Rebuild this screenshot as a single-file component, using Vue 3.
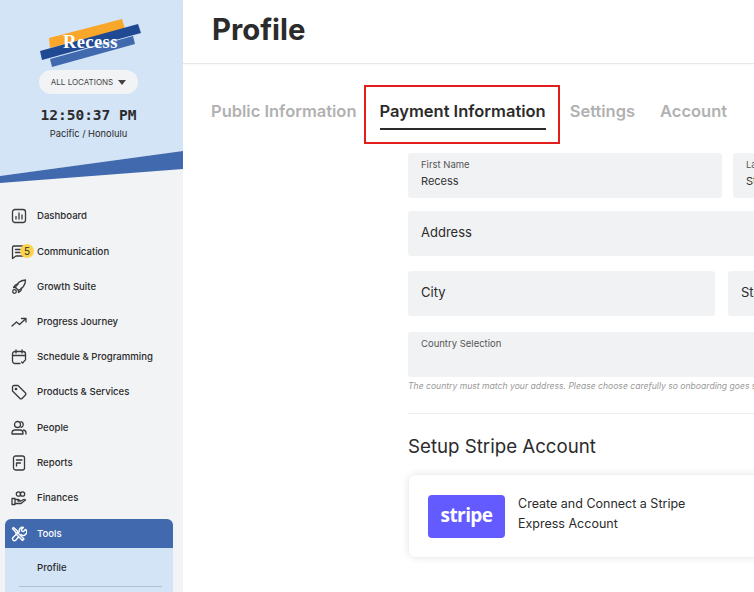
<script setup>
const items = [
  { label: 'Dashboard', icon: 'dash' },
  { label: 'Communication', icon: 'chat', badge: 5 },
  { label: 'Growth Suite', icon: 'rocket' },
  { label: 'Progress Journey', icon: 'trend' },
  { label: 'Schedule & Programming', icon: 'cal' },
  { label: 'Products & Services', icon: 'tag' },
  { label: 'People', icon: 'people' },
  { label: 'Reports', icon: 'report' },
  { label: 'Finances', icon: 'fin' },
]
const tabs = ['Public Information', 'Payment Information', 'Settings', 'Account']
</script>

<template>
  <div class="app">
    <aside class="side">
      <div class="brand">
        <div class="logo">
          <svg width="102" height="50" viewBox="0 0 102 50">
            <polygon points="9,20 82,1 85,11 10,30" fill="#f9a72b" />
            <polygon points="10,41 93,18 95,26 12,49" fill="#4069ae" />
            <polygon points="0,33 98,6 101,15 2,42" fill="#1f4a93" />
          </svg>
          <span class="logo-text">Recess</span>
        </div>
        <div class="loc">ALL LOCATIONS <span class="caret"></span></div>
        <div class="time">12:50:37 PM</div>
        <div class="tz">Pacific / Honolulu</div>
      </div>
      <svg class="band" width="183" height="32" viewBox="0 0 183 32">
        <polygon points="0,0 183,0 0,25" fill="#d2e4f6" />
        <polygon points="0,25 183,0 183,18 0,32" fill="#4069ae" />
      </svg>
      <nav class="nav">
        <a v-for="it in items" :key="it.label" class="item">
          <svg class="ico" width="16" height="16" viewBox="0 0 16 16" fill="none" stroke="#3a3a3a" stroke-width="1.3" stroke-linecap="round" stroke-linejoin="round">
            <template v-if="it.icon === 'dash'">
              <rect x="1.500" y="1.500" width="13" height="13" rx="2.500" />
              <path d="M5 11V8.500M8 11V5M11 11V7" />
            </template>
            <template v-else-if="it.icon === 'chat'">
              <path d="M4 2h9a1.500 1.500 0 0 1 1.500 1.500v7A1.500 1.500 0 0 1 13 12H5l-3.500 2.500v-11A1.500 1.500 0 0 1 3 2z" />
              <path d="M4.500 5.500h5M4.500 8.500h5" />
            </template>
            <template v-else-if="it.icon === 'rocket'">
              <path d="M6 10l-1.500-1.500c1-3.500 4.500-7 10-7.500 0 5-3.500 9-7 10.500z" />
              <path d="M4.500 8.500L2.500 8.500 4.500 6 7 5.600M7.500 11.500v2l2.500-2 .4-2.500" />
              <circle cx="3.500" cy="12.500" r="1.800" />
            </template>
            <template v-else-if="it.icon === 'trend'">
              <path d="M1 12l4.500-4 3 2.500L14.500 5" />
              <path d="M10.500 4.500h4.500V8" />
            </template>
            <template v-else-if="it.icon === 'cal'">
              <path d="M9 14.500H4A2.500 2.500 0 0 1 1.500 12V5A2.500 2.500 0 0 1 4 2.500h8A2.500 2.500 0 0 1 14.500 5v6" />
              <path d="M1.500 6.500h13M5 1v3M11 1v3M10.500 13l1.200 1 2-2.400" />
            </template>
            <template v-else-if="it.icon === 'tag'">
              <path d="M1.500 3A1.500 1.500 0 0 1 3 1.500h4l7.500 7.500a1.400 1.400 0 0 1 0 2l-3.500 3.500a1.400 1.400 0 0 1-2 0L1.500 7z" />
              <circle cx="5" cy="5" r=".7" />
            </template>
            <template v-else-if="it.icon === 'people'">
              <circle cx="6.500" cy="4.500" r="3" />
              <path d="M1 14v-1.500A3 3 0 0 1 4 10h5a3 3 0 0 1 3 3v1zM10 1.600a3 3 0 0 1 0 5.800M12.500 10a3 3 0 0 1 2.500 3v1" />
            </template>
            <template v-else-if="it.icon === 'report'">
              <rect x="2.500" y="1" width="11" height="14" rx="2" />
              <path d="M5.500 5h5.500M5.500 8h4M5.500 11V8" />
            </template>
            <template v-else>
              <circle cx="7.500" cy="4" r="2.200" />
              <circle cx="11.500" cy="4" r="2.200" />
              <path d="M1 8.500h3v6H1zM4 9.500h3.500l2 1.500H7M4 13.500h6l4.500-3.500c-.7-1-1.800-.8-2.500-.3L10 11" />
            </template>
          </svg>
          <span v-if="it.badge" class="badge">{{ it.badge }}</span>
          <span>{{ it.label }}</span>
        </a>
        <div class="group">
          <div class="group-head">
            <svg class="ico" width="16" height="16" viewBox="0 0 16 16" fill="none" stroke="#fff" stroke-width="1.400" stroke-linecap="round" stroke-linejoin="round">
              <path d="M1.500 2.500l1-1 4 3.500v1.500l6.500 6.500-1.500 1.500L5 8V6.500z" />
              <path d="M14.500 3.500l-2 2-1.700-.4-.4-1.700 2-2a3.200 3.200 0 0 0-4 4L2 11.500a2 2 0 0 0 2.500 3l3-3.500" />
              <path d="M10 8.500a3.200 3.200 0 0 0 4.500-5" />
            </svg>
            <span>Tools</span>
          </div>
          <div class="sub">
            <div class="sub-item">Profile</div>
          </div>
        </div>
      </nav>
    </aside>

    <main class="main">
      <header class="head"><h1>Profile</h1></header>
      <div class="tabs">
        <div v-for="t in tabs" :key="t" class="tab" :class="{ on: t === 'Payment Information' }">
          <span class="tab-text">{{ t }}</span>
        </div>
      </div>
      <form class="form">
        <div class="row two-a">
          <div class="field small">
            <label>First Name</label>
            <div class="val">Recess</div>
          </div>
          <div class="field small">
            <label>Last Name</label>
            <div class="val">Studio</div>
          </div>
        </div>
        <div class="field plain address">Address</div>
        <div class="row two-b">
          <div class="field plain">City</div>
          <div class="field plain">State</div>
        </div>
        <div class="field small country"><label>Country Selection</label></div>
        <p class="help">The country must match your address. Please choose carefully so onboarding goes smoothly and without any problems.</p>
        <hr class="rule" />
        <h2>Setup Stripe Account</h2>
        <div class="card">
          <div class="stripe">stripe</div>
          <div class="card-text">Create and Connect a Stripe<br />Express Account</div>
        </div>
      </form>
    </main>
  </div>
</template>

<style>
html, body { margin: 0; overflow: hidden; background: #fff; }
</style>

<style scoped>
.app {
  display: flex;
  width: 754px;
  height: 592px;
  overflow: hidden;
  font-family: Inter, "Liberation Sans", sans-serif;
  color: #2b2b2b;
}
.side {
  width: 183px;
  flex: none;
  background: #f2f3f5;
  overflow: hidden;
}
.brand {
  height: 151px;
  background: #d2e4f6;
  display: flex;
  flex-direction: column;
  align-items: center;
  box-sizing: border-box;
  padding: 18px 6px 0 0;
}
.logo {
  position: relative;
  width: 102px;
  height: 50px;
  margin-left: 5px;
}
.logo svg { display: block; }
.logo-text {
  position: absolute;
  left: 23px;
  top: 14px;
  font-family: "Liberation Serif", serif;
  font-weight: 700;
  font-size: 18.500px;
  line-height: 20px;
  color: #fff;
  letter-spacing: .4px;
}
.loc {
  margin-top: 2px;
  width: 99px;
  height: 24px;
  border-radius: 12px;
  background: #f2f3f5;
  display: flex;
  align-items: center;
  justify-content: center;
  gap: 5px;
  font-size: 8px;
  color: #444;
}
.caret {
  width: 0;
  height: 0;
  border-left: 4px solid transparent;
  border-right: 4px solid transparent;
  border-top: 5px solid #444;
}
.time {
  margin-top: 12px;
  font-family: "DejaVu Sans Mono", monospace;
  font-weight: 700;
  font-size: 14.500px;
  line-height: 18px;
  color: #2b2b2b;
}
.tz {
  margin-top: 3px;
  font-size: 9.300px;
  line-height: 13px;
}
.band { display: block; }
.nav {
  padding-top: 15.400px;
  display: flex;
  flex-direction: column;
}
.item {
  position: relative;
  height: 35.200px;
  display: flex;
  align-items: center;
  padding-left: 37px;
  font-size: 9.600px;
  font-weight: 500;
  white-space: nowrap;
  color: #2b2b2b;
}
.ico {
  position: absolute;
  left: 11px;
  top: 50%;
  margin-top: -7.500px;
}
.badge {
  position: absolute;
  left: 20px;
  top: 50%;
  margin-top: -7px;
  width: 14px;
  height: 14px;
  border-radius: 50%;
  background: #fbd24e;
  font-size: 10px;
  font-weight: 400;
  line-height: 14px;
  text-align: center;
}
.group {
  margin: 4px 10px 0 5px;
}
.group-head {
  position: relative;
  height: 29px;
  background: #4069ae;
  border-radius: 6px 6px 0 0;
  color: #fff;
  font-size: 9.600px;
  font-weight: 500;
  display: flex;
  align-items: center;
  padding-left: 32px;
}
.group-head .ico { left: 6px; }
.sub {
  background: #d2e4f6;
  height: 60px;
}
.sub-item {
  margin: 0 11px 0 14px;
  padding-left: 18px;
  height: 38px;
  border-bottom: 1px solid #b3c0cc;
  display: flex;
  align-items: center;
  font-size: 9.600px;
  font-weight: 500;
}
.main {
  flex: 1;
  min-width: 0;
}
.head {
  height: 64px;
  box-sizing: border-box;
  border-bottom: 1px solid #e8e8e8;
  box-shadow: 0 1px 2px rgba(0, 0, 0, .04);
  padding: 12px 0 0 29px;
}
h1 {
  margin: 0;
  font-size: 29.300px;
  line-height: 36px;
  font-weight: 700;
  color: #2b2b2b;
}
.tabs {
  display: flex;
  padding: 21px 0 0 28px;
  height: 68px;
  box-sizing: border-box;
}
.tab {
  margin-right: 24px;
  font-size: 16.500px;
  font-weight: 600;
  line-height: 22px;
  padding-top: 15px;
  color: #b1b1b1;
  white-space: nowrap;
}
.tab:first-child { margin-right: 23px; }
.tab:nth-child(3) { margin-right: 25px; }
.tab-text { display: block; }
.tab.on {
  position: relative;
  color: #2b2b2b;
}
.tab.on .tab-text {
  border-bottom: 2px solid #2b2b2b;
  padding-bottom: 6px;
}
.tab.on::after {
  content: "";
  position: absolute;
  left: -16px;
  right: -14px;
  top: 0;
  height: 59px;
  box-sizing: border-box;
  border: 2px solid #e31c1c;
}
.form {
  width: 640px;
  margin: 21px 0 0 225px;
}
.row { display: grid; }
.two-a { grid-template-columns: 314px 1fr; column-gap: 11px; margin-bottom: 13px; }
.two-b { grid-template-columns: 307px 1fr; column-gap: 13px; margin-bottom: 16px; }
.field {
  height: 45px;
  background: #f1f2f4;
  border-radius: 3px;
  box-sizing: border-box;
  padding-left: 13px;
  color: #2b2b2b;
}
.plain {
  font-size: 13px;
  line-height: 43px;
}
.address { margin-bottom: 15px; }
.small label {
  display: block;
  padding-top: 5px;
  font-size: 9.500px;
  line-height: 13px;
  color: #555;
}
.val {
  margin-top: 3px;
  font-size: 11px;
  line-height: 15px;
  color: #333;
}
.help {
  margin: 3px 0 0;
  font-size: 8.600px;
  line-height: 12px;
  font-style: italic;
  color: #999;
  white-space: nowrap;
}
.rule {
  margin: 21px 0 0;
  border: 0;
  border-top: 1px solid #eee;
}
h2 {
  margin: 20.500px 0 16.500px;
  font-size: 18.700px;
  line-height: 24px;
  font-weight: 400;
  color: #2b2b2b;
}
.card {
  margin-left: 1px;
  height: 82px;
  border-radius: 6px;
  background: #fff;
  box-shadow: 0 0 8px rgba(0, 0, 0, .12);
  display: flex;
  align-items: center;
  padding-left: 19px;
  gap: 13px;
}
.stripe {
  width: 77px;
  height: 43px;
  box-sizing: border-box;
  padding-bottom: 3px;
  border-radius: 4px;
  background: #635bff;
  color: #fff;
  display: flex;
  align-items: center;
  justify-content: center;
  font-family: "Open Sans", sans-serif;
  font-weight: 700;
  font-size: 19px;
  letter-spacing: -.6px;
}
.card-text {
  font-size: 12.500px;
  line-height: 20px;
  padding-bottom: 4px;
  color: #2b2b2b;
}
</style>
